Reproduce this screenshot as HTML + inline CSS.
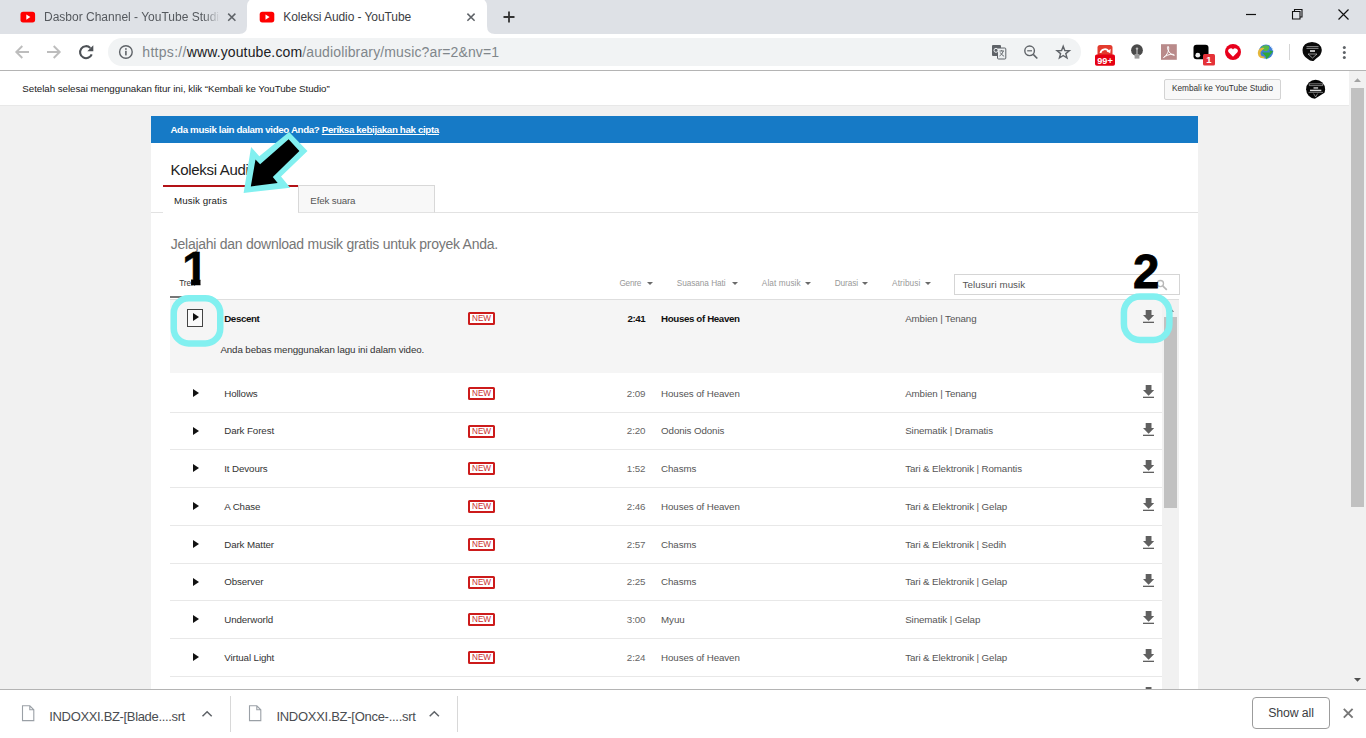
<!DOCTYPE html>
<html lang="id">
<head>
<meta charset="utf-8">
<title>Koleksi Audio - YouTube</title>
<style>
*{box-sizing:border-box;margin:0;padding:0}
html,body{width:1366px;height:738px;overflow:hidden;background:#f1f1f1;font-family:"Liberation Sans",sans-serif;color:#333}
.abs{position:absolute}
#tabstrip{left:0;top:0;width:1366px;height:34px;background:#dee1e6}
#activetab{left:247px;top:-2px;width:240px;height:36px;background:#fff;border-radius:8px 8px 0 0}
.tabtitle{font-size:12px;line-height:14px;color:#3c4043;white-space:nowrap;top:10.4px}
#toolbar{left:0;top:34px;width:1366px;height:36px;background:#fff}
#toolbarline{left:0;top:70px;width:1366px;height:1px;background:#b4b4b4}
#omni{left:108px;top:38px;width:973px;height:28px;border-radius:14px;background:#f1f3f4}
#url{left:142.3px;top:44px;font-size:14px;line-height:17px;color:#80868b;white-space:nowrap}
#url b{font-weight:normal;color:#202124}
#notice{left:0;top:71px;width:1349px;height:35px;background:#fff;border-bottom:1px solid #e8e8e8}
#noticetext{left:22.3px;top:82.9px;font-size:9.75px;line-height:12px;letter-spacing:-0.04px;color:#222;white-space:nowrap}
#backbtn{left:1164px;top:79px;width:117px;height:21px;background:#f8f8f8;border:1px solid #d3d3d3;border-radius:2px;font-size:8.25px;color:#333;text-align:center;line-height:17.5px;white-space:nowrap}
#vscroll{left:1349px;top:71px;width:17px;height:618px;background:#f1f1f1}
#vthumb{left:1351px;top:88px;width:13px;height:419px;background:#c1c1c1}
#bluebar{left:151px;top:116px;width:1047px;height:27px;background:#167ac6}
#bluetext{left:170.4px;top:123.9px;font-size:9.75px;line-height:12px;letter-spacing:-0.36px;font-weight:bold;color:#fff;white-space:nowrap}
#bluetext u{text-decoration:underline}
#main{left:151px;top:143px;width:1047px;height:546px;background:#fff}
#h1{left:170.6px;top:160.5px;font-size:15px;line-height:18px;letter-spacing:-0.32px;color:#222;white-space:nowrap}
#tabline{left:151px;top:212px;width:1047px;height:1px;background:#e2e2e2}
#tab1{left:163px;top:185px;width:135px;height:28px;background:#fff;border-top:2px solid #b31217}
#tab2{left:298px;top:185px;width:137px;height:28px;background:#f8f8f8;border:1px solid #d8d8d8;border-bottom:1px solid #e2e2e2}
.tabt{font-size:9.75px;line-height:12px;white-space:nowrap}
#sub{left:170.8px;top:235.5px;font-size:14px;line-height:17px;letter-spacing:-0.26px;color:#767676;white-space:nowrap}
.flt{font-size:8.25px;line-height:10px;color:#999;white-space:nowrap;top:279px}
.farr{position:absolute;top:281.8px;width:0;height:0;border-left:3.2px solid transparent;border-right:3.2px solid transparent;border-top:3.6px solid #6a6a6a;margin-left:-0.3px}
#search{left:954px;top:274px;width:226px;height:21px;border:1px solid #d5d5d5;background:#fff}
#searchtext{left:962.5px;top:278.5px;font-size:9.75px;line-height:12px;letter-spacing:0.07px;color:#555;white-space:nowrap}
#hdrline{left:170px;top:299px;width:1009px;height:1px;background:#dedede}
#trekline{left:170px;top:296px;width:14px;height:2px;background:#777}
#row1{left:170px;top:300px;width:992px;height:73px;background:#f5f5f5}
.row{left:170px;width:992px;height:38px;border-bottom:1px solid #e8e8e8}
.row span,.r1 span{position:absolute;white-space:nowrap;top:12.6px;font-size:9.75px;line-height:12px;letter-spacing:-0.1px}
.r1 span{top:13.1px}
.r1 span.b{font-weight:bold;color:#111;letter-spacing:-0.38px}
.r1 span.note{left:50.4px;top:44.4px;color:#333}
.tri{position:absolute;left:23.1px;top:13.9px;width:0;height:0;border-top:4px solid transparent;border-bottom:4px solid transparent;border-left:6.8px solid #111}
.t{left:54.2px;color:#333}
.lo>*{margin-top:0.8px}
.row span.new,.r1 span.new{left:298px;top:12px;width:27px;height:13px;border:2px solid #cc1b1b;border-radius:1.5px;color:#c93030;font-size:8.2px;line-height:9.8px;text-align:center;background:#fff;letter-spacing:-0.1px;overflow:hidden}
.r1 span.new{top:12px}
.d{right:516.6px;color:#666}
.a{left:491.1px;color:#555}
.g{left:735.2px;color:#555}
.dl{position:absolute;left:973px;top:10.2px;width:11.2px;height:13.2px}
.r1 .dl{top:9.7px}
#lscroll{left:1162px;top:300px;width:17px;height:389px;background:#f1f1f1}
#lthumb{left:1164px;top:317px;width:13px;height:190.5px;background:#c1c1c1}
#dlbar{left:0;top:689px;width:1366px;height:49px;background:#fff;border-top:1px solid #b4b4b4}
.dltext{font-size:13px;line-height:16px;color:#4a4d51;white-space:nowrap;top:708.5px}
#showall{left:1252px;top:697px;width:78px;height:32px;border:1px solid #9c9c9c;border-radius:4px;background:#fff;font-size:12.3px;letter-spacing:-0.1px;color:#3c4043;text-align:center;line-height:30px}
.num{font-weight:bold;color:#000;font-size:47.3px;line-height:47.3px;height:47.3px}
</style>
</head>
<body>
<!-- browser chrome -->
<div id="tabstrip" class="abs"></div>
<div id="activetab" class="abs"></div>
<div id="tt1" class="abs tabtitle" style="left:44px;color:#55595e;width:176px;overflow:hidden;-webkit-mask-image:linear-gradient(90deg,#000 160px,transparent 176px);mask-image:linear-gradient(90deg,#000 160px,transparent 176px)">Dasbor Channel - YouTube Studio</div>
<div id="tt2" class="abs tabtitle" style="left:283.3px;letter-spacing:-0.08px">Koleksi Audio - YouTube</div>
<div id="toolbar" class="abs"></div>
<div id="omni" class="abs"></div>
<div id="url" class="abs"><span id="u1" style="letter-spacing:0.3px">https://</span><b id="u2" style="letter-spacing:0.126px">www.youtube.com</b><span id="u3" style="letter-spacing:0.138px">/audiolibrary/music?ar=2&amp;nv=1</span></div>
<div id="toolbarline" class="abs"></div>
<!-- chrome icons -->
<svg class="abs" style="left:0;top:0" width="1366" height="71" viewBox="0 0 1366 71">
 <!-- active tab outward curves -->
 <path d="M239 34 Q247 34 247 26 L247 34 Z" fill="#fff"/>
 <path d="M495 34 Q487 34 487 26 L487 34 Z" fill="#fff"/>
 <!-- favicons -->
 <g id="yt1"><rect x="20.5" y="11.8" width="14.6" height="10.6" rx="2.6" fill="#f00"/><path d="M26.3 14.4 L30.4 17.1 L26.3 19.8 Z" fill="#fff"/></g>
 <g><rect x="259.7" y="11.8" width="14.6" height="10.6" rx="2.6" fill="#f00"/><path d="M265.5 14.4 L269.6 17.1 L265.5 19.8 Z" fill="#fff"/></g>
 <!-- tab close -->
 <path d="M228.2 13.6 l7.2 7.2 m0 -7.2 l-7.2 7.2" stroke="#5f6368" stroke-width="1.5" fill="none"/>
 <path d="M467.4 13.6 l7.2 7.2 m0 -7.2 l-7.2 7.2" stroke="#5f6368" stroke-width="1.5" fill="none"/>
 <!-- plus -->
 <path d="M503.5 17 h11 M509 11.5 v11" stroke="#333" stroke-width="1.8" fill="none"/>
 <!-- window controls -->
 <path d="M1246 14.5 h10" stroke="#111" stroke-width="1.2"/>
 <path d="M1292.5 11.5 h7.5 v7.5 h-7.5 z M1294.5 11.5 v-2 h7.5 v7.5 h-2" stroke="#111" stroke-width="1.1" fill="none"/>
 <path d="M1338.5 9.5 l10 10 m0 -10 l-10 10" stroke="#111" stroke-width="1.2" fill="none"/>
 <!-- back / forward / reload -->
 <path d="M29 52 H16.5 M22.3 46 L16.3 52 L22.3 58" stroke="#bdbdbd" stroke-width="1.9" fill="none"/>
 <path d="M47 52 H59.5 M53.7 46 L59.7 52 L53.7 58" stroke="#bdbdbd" stroke-width="1.9" fill="none"/>
 <path d="M90.3 47.9 A6 6 0 1 0 91.7 54.3" stroke="#4d5156" stroke-width="2.1" fill="none"/>
 <path d="M93.3 45.2 V51.2 H87.3 Z" fill="#4d5156"/>
 <!-- info -->
 <circle cx="125.9" cy="52" r="6.3" stroke="#5f6368" stroke-width="1.4" fill="none"/>
 <rect x="125.1" y="50.8" width="1.6" height="4.6" fill="#5f6368"/><rect x="125.1" y="48.2" width="1.6" height="1.6" fill="#5f6368"/>
 <!-- translate -->
 <rect x="992" y="45" width="9" height="11" rx="1" fill="#5f6368"/>
 <rect x="997.5" y="48" width="8.3" height="11" rx="1" fill="#eceff1" stroke="#5f6368" stroke-width="1"/>
 <path d="M999.5 51 h4.5 M1001.7 50 v1 M1003.3 51 q-1 3.5 -3.8 5 M1000.3 52.5 q1.2 2.5 3.8 3.8" stroke="#5f6368" stroke-width="0.9" fill="none"/>
 <circle cx="996" cy="50.3" r="2" stroke="#eceff1" stroke-width="1" fill="none"/>
 <!-- zoom out -->
 <circle cx="1029.6" cy="50.8" r="4.8" stroke="#5f6368" stroke-width="1.4" fill="none"/>
 <path d="M1033.2 54.4 L1037.3 58.5" stroke="#5f6368" stroke-width="1.6"/>
 <path d="M1027.2 50.8 h4.8" stroke="#5f6368" stroke-width="1.2"/>
 <!-- star -->
 <path d="M1063.2 46.2 L1064.8 50.5 L1069.4 50.7 L1065.8 53.6 L1067.0 58.0 L1063.2 55.5 L1059.4 58.0 L1060.6 53.6 L1057.0 50.7 L1061.6 50.5 Z" stroke="#5f6368" stroke-width="1.4" fill="none" stroke-linejoin="miter"/>
 <!-- red ext -->
 <rect x="1097.5" y="45" width="15" height="12" rx="2.5" fill="#e33b2e"/>
 <path d="M1100.5 53 a4.3 4.3 0 0 1 8.2 -1.2" stroke="#fff" stroke-width="1.8" fill="none"/>
 <path d="M1110.8 49 l-0.6 4.2 l-3.6 -2 z" fill="#fff"/>
 <rect x="1095" y="54.5" width="20" height="11.2" rx="1.8" fill="#e60012"/>
 <text x="1105" y="63.6" font-family="Liberation Sans, sans-serif" font-weight="bold" font-size="9.2" fill="#fff" text-anchor="middle">99+</text>
 <!-- bulb -->
 <circle cx="1137" cy="50.2" r="5.9" fill="#4a4a4a"/>
 <rect x="1134.6" y="54" width="4.8" height="4.6" fill="#9a9a9a"/>
 <path d="M1137 48.5 v6" stroke="#bbb" stroke-width="1.2"/>
 <circle cx="1137" cy="48.6" r="1.2" fill="#bbb"/>
 <!-- pdf -->
 <rect x="1161" y="44.2" width="15.8" height="15.6" fill="#b98a8a"/>
 <path d="M1163.5 57.5 C1167.5 55 1169.3 50 1168.6 47 C1168.2 45.6 1167 46.6 1167.6 48.8 C1168.6 52.3 1171.2 54.8 1174.3 55.4 C1175.4 54 1169 53.2 1163.5 57.5 Z" stroke="#fff" stroke-width="1" fill="none"/>
 <!-- black ext -->
 <rect x="1193.5" y="44.7" width="15" height="14.6" rx="3" fill="#000"/>
 <circle cx="1197.8" cy="55.2" r="2.4" fill="#eee"/>
 <rect x="1203" y="54" width="12" height="11.6" rx="1.5" fill="#e53238"/>
 <text x="1209" y="63.4" font-family="Liberation Sans, sans-serif" font-weight="bold" font-size="9.5" fill="#fff" text-anchor="middle">1</text>
 <!-- heart -->
 <circle cx="1233" cy="52" r="8" fill="#e8001c"/>
 <path d="M1233 56.8 L1228.6 52.3 A2.5 2.5 0 0 1 1233 49.6 A2.5 2.5 0 0 1 1237.4 52.3 Z" fill="#fff"/>
 <!-- idm globe -->
 <circle cx="1266" cy="51.6" r="7.2" fill="#3f7fd6"/>
 <path d="M1261 47 q4 -3 8 -1 q1 3 -2 5 q-4 1 -6 -4 z" fill="#58b947"/>
 <path d="M1258.5 50 q2 -3 6 -2 l-3 3 q-2 2 0 5 l4 1 q-4 3 -7 -1 q-1.5 -3 0 -6 z" fill="#e5b73b"/>
 <path d="M1262 52.5 h8.5 l-1.5 -2.2 l4 1 l-6.5 8.3 l-0.8 -3.4 z" fill="#2fa836"/>
 <path d="M1270 46 q2.5 1.5 3 4.5" stroke="#cfe3ff" stroke-width="1" fill="none"/>
 <!-- separator -->
 <rect x="1289" y="44" width="1" height="16" fill="#d5d5d5"/>
 <!-- avatar -->
 <path d="M1302.5 50 q0.5 -7.5 9.5 -8 q9 0.5 9.8 8 q0 5 -5.3 8.2 l-3 2.8 q-3 0.6 -6 -2.2 q-5 -3 -5 -8.8 z" fill="#0a0a0a"/>
 <path d="M1306.5 46.6 h12 M1306.5 48.4 h12 M1308 54 h9 l-4.5 4 z" stroke="#ddd" stroke-width="0.6" fill="none"/>
 <rect x="1310" y="50" width="5" height="2" fill="#bbb"/>
 <!-- menu dots -->
 <circle cx="1344.3" cy="47.6" r="1.5" fill="#5f6368"/><circle cx="1344.3" cy="52.5" r="1.5" fill="#5f6368"/><circle cx="1344.3" cy="57.4" r="1.5" fill="#5f6368"/>
</svg>


<!-- page -->
<div id="notice" class="abs"></div>
<div id="noticetext" class="abs">Setelah selesai menggunakan fitur ini, klik “Kembali ke YouTube Studio”</div>
<div id="backbtn" class="abs">Kembali ke YouTube Studio</div>
<div id="vscroll" class="abs"></div>
<div id="vthumb" class="abs"></div>


<!-- page avatar + scroll arrows -->
<svg class="abs" style="left:1290px;top:71px" width="76" height="620" viewBox="1290 71 76 620">
 <path d="M1306.1 89.3 a9.5 9.5 0 0 1 19 0 q0 2 -0.6 3.4 l-9.6 6 a9.5 9.5 0 0 1 -8.8 -9.4 z" fill="#050505"/>
 <path d="M1309.3 83.8 h13.4 v1.8 h-13.4 z M1308.6 92.4 h14.4 M1313.6 93.6 l2 3.4 l2 -3.4" stroke="#e6e6e6" stroke-width="0.5" fill="none"/>
 <rect x="1313.5" y="87.3" width="4.6" height="1.3" fill="#ddd"/><rect x="1310" y="89.7" width="11.3" height="1.5" fill="#ddd"/>
 <path d="M1354 82 l3.5 -3.7 l3.5 3.7 z" fill="#a3a3a3"/>
 <path d="M1354 678 l3.5 3.7 l3.5 -3.7 z" fill="#505050"/>
</svg>
<div id="bluebar" class="abs"></div>
<div id="bluetext" class="abs">Ada musik lain dalam video Anda? <u>Periksa kebijakan hak cipta</u></div>
<div id="main" class="abs"></div>
<div id="h1" class="abs">Koleksi Audio</div>
<div id="tabline" class="abs"></div>
<div id="tab1" class="abs"></div>
<div id="tab2" class="abs"></div>
<div class="abs tabt" style="left:174px;top:194.6px;color:#222;letter-spacing:0.09px">Musik gratis</div>
<div class="abs tabt" style="left:310.3px;top:194.6px;color:#555;letter-spacing:-0.16px">Efek suara</div>
<div id="sub" class="abs">Jelajahi dan download musik gratis untuk proyek Anda.</div>

<div id="f0" class="abs flt" style="left:179.2px;color:#333;letter-spacing:-0.1px">Trek</div>
<div id="f1" class="abs flt" style="left:619.4px;letter-spacing:-0.25px">Genre</div><div class="farr" style="left:647px"></div>
<div id="f2" class="abs flt" style="left:676.7px;letter-spacing:-0.05px">Suasana Hati</div><div class="farr" style="left:731.9px"></div>
<div id="f3" class="abs flt" style="left:761.8px;letter-spacing:0.09px">Alat musik</div><div class="farr" style="left:805px"></div>
<div id="f4" class="abs flt" style="left:834.7px;letter-spacing:-0.07px">Durasi</div><div class="farr" style="left:862.4px"></div>
<div id="f5" class="abs flt" style="left:892px;letter-spacing:0.13px">Atribusi</div><div class="farr" style="left:924.9px"></div>
<div id="search" class="abs"></div>
<div id="searchtext" class="abs">Telusuri musik</div>
<svg class="abs" style="left:1154px;top:277px" width="16" height="16" viewBox="1154 277 16 16"><circle cx="1160.4" cy="283.6" r="3.1" stroke="#b8b8b8" stroke-width="1.3" fill="none"/><path d="M1162.7 285.9 L1166.8 289.9" stroke="#b8b8b8" stroke-width="1.7"/></svg>
<div id="hdrline" class="abs"></div>
<div id="trekline" class="abs"></div>

<div id="row1" class="abs"></div>
<!--ROWS-->
<div class="abs r1" style="left:170px;top:300px;width:992px;height:73px"><div style="position:absolute;left:17px;top:9px;width:16px;height:18px;border:1px solid #444;background:#fafafa"></div><div class="tri" style="top:13.2px"></div><span class="t b">Descent</span><span class="new">NEW</span><span class="d b">2:41</span><span class="a b">Houses of Heaven</span><span class="g">Ambien | Tenang</span><svg class="dl" viewBox="0 0 11.2 13.2"><path d="M2.7 0h5.8v5h2.7L5.6 10.8 0 5h2.7z" fill="#606060"/><rect x="0" y="11.7" width="11.2" height="1.5" fill="#606060"/></svg><span class="note">Anda bebas menggunakan lagu ini dalam video.</span></div>
<div class="abs row" style="top:375px"><div class="tri"></div><span class="t">Hollows</span><span class="new">NEW</span><span class="d">2:09</span><span class="a">Houses of Heaven</span><span class="g">Ambien | Tenang</span><svg class="dl" viewBox="0 0 11.2 13.2"><path d="M2.7 0h5.8v5h2.7L5.6 10.8 0 5h2.7z" fill="#606060"/><rect x="0" y="11.7" width="11.2" height="1.5" fill="#606060"/></svg></div>
<div class="abs row lo" style="top:412px"><div class="tri"></div><span class="t">Dark Forest</span><span class="new">NEW</span><span class="d">2:20</span><span class="a">Odonis Odonis</span><span class="g">Sinematik | Dramatis</span><svg class="dl" viewBox="0 0 11.2 13.2"><path d="M2.7 0h5.8v5h2.7L5.6 10.8 0 5h2.7z" fill="#606060"/><rect x="0" y="11.7" width="11.2" height="1.5" fill="#606060"/></svg></div>
<div class="abs row" style="top:450px"><div class="tri"></div><span class="t">It Devours</span><span class="new">NEW</span><span class="d">1:52</span><span class="a">Chasms</span><span class="g">Tari &amp; Elektronik | Romantis</span><svg class="dl" viewBox="0 0 11.2 13.2"><path d="M2.7 0h5.8v5h2.7L5.6 10.8 0 5h2.7z" fill="#606060"/><rect x="0" y="11.7" width="11.2" height="1.5" fill="#606060"/></svg></div>
<div class="abs row" style="top:488px"><div class="tri"></div><span class="t">A Chase</span><span class="new">NEW</span><span class="d">2:46</span><span class="a">Houses of Heaven</span><span class="g">Tari &amp; Elektronik | Gelap</span><svg class="dl" viewBox="0 0 11.2 13.2"><path d="M2.7 0h5.8v5h2.7L5.6 10.8 0 5h2.7z" fill="#606060"/><rect x="0" y="11.7" width="11.2" height="1.5" fill="#606060"/></svg></div>
<div class="abs row" style="top:526px"><div class="tri"></div><span class="t">Dark Matter</span><span class="new">NEW</span><span class="d">2:57</span><span class="a">Chasms</span><span class="g">Tari &amp; Elektronik | Sedih</span><svg class="dl" viewBox="0 0 11.2 13.2"><path d="M2.7 0h5.8v5h2.7L5.6 10.8 0 5h2.7z" fill="#606060"/><rect x="0" y="11.7" width="11.2" height="1.5" fill="#606060"/></svg></div>
<div class="abs row lo" style="top:563px"><div class="tri"></div><span class="t">Observer</span><span class="new">NEW</span><span class="d">2:25</span><span class="a">Chasms</span><span class="g">Tari &amp; Elektronik | Gelap</span><svg class="dl" viewBox="0 0 11.2 13.2"><path d="M2.7 0h5.8v5h2.7L5.6 10.8 0 5h2.7z" fill="#606060"/><rect x="0" y="11.7" width="11.2" height="1.5" fill="#606060"/></svg></div>
<div class="abs row" style="top:601px"><div class="tri"></div><span class="t">Underworld</span><span class="new">NEW</span><span class="d">3:00</span><span class="a">Myuu</span><span class="g">Sinematik | Gelap</span><svg class="dl" viewBox="0 0 11.2 13.2"><path d="M2.7 0h5.8v5h2.7L5.6 10.8 0 5h2.7z" fill="#606060"/><rect x="0" y="11.7" width="11.2" height="1.5" fill="#606060"/></svg></div>
<div class="abs row" style="top:639px"><div class="tri"></div><span class="t">Virtual Light</span><span class="new">NEW</span><span class="d">2:24</span><span class="a">Houses of Heaven</span><span class="g">Tari &amp; Elektronik | Gelap</span><svg class="dl" viewBox="0 0 11.2 13.2"><path d="M2.7 0h5.8v5h2.7L5.6 10.8 0 5h2.7z" fill="#606060"/><rect x="0" y="11.7" width="11.2" height="1.5" fill="#606060"/></svg></div>
<div class="abs row" style="top:677px;border:0;height:12px;overflow:hidden"><svg class="dl" viewBox="0 0 11.2 13.2"><path d="M2.7 0h5.8v5h2.7L5.6 10.8 0 5h2.7z" fill="#606060"/><rect x="0" y="11.7" width="11.2" height="1.5" fill="#606060"/></svg></div>
<!--/ROWS-->

<div id="lscroll" class="abs"></div>
<div id="lthumb" class="abs"></div>
<svg class="abs" style="left:1162px;top:300px" width="17" height="17" viewBox="1162 300 17 17"><path d="M1167 311.8 l3.5 -3.7 l3.5 3.7 z" fill="#505050"/></svg>

<!-- downloads bar -->
<div id="dlbar" class="abs"></div>
<div id="dl1" class="abs dltext" style="left:49.3px;letter-spacing:-0.34px">INDOXXI.BZ-[Blade....srt</div>
<div id="dl2" class="abs dltext" style="left:276.4px;letter-spacing:-0.28px">INDOXXI.BZ-[Once-....srt</div>
<div id="showall" class="abs">Show all</div>
<svg class="abs" style="left:0;top:690px" width="1366" height="48" viewBox="0 690 1366 48">
 <g fill="none" stroke="#9aa0a6" stroke-width="1.1"><path d="M22.5 705.8 h7.3 l4 4 v10.8 h-11.3 z M29.8 705.8 v4 h4"/><path d="M249.5 705.8 h7.3 l4 4 v10.8 h-11.3 z M256.8 705.8 v4 h4"/></g>
 <path d="M202.5 716.3 l4.6 -4.6 l4.6 4.6 M429.7 716.3 l4.6 -4.6 l4.6 4.6" fill="none" stroke="#5f6368" stroke-width="1.5"/>
 <rect x="230" y="696" width="1" height="36" fill="#d8d8d8"/><rect x="457" y="696" width="1" height="36" fill="#d8d8d8"/>
 <path d="M1343.8 708.8 l8.8 8.8 m0 -8.8 l-8.8 8.8" stroke="#777" stroke-width="1.9" fill="none"/>
</svg>


<!-- annotations -->
<svg class="abs" style="left:0;top:100px;pointer-events:none" width="1366" height="260" viewBox="0 100 1366 260">
 <polygon points="243.6,192.9 251.1,147.1 259.3,156.3 289.1,131.9 307.5,150.9 281,176.4 290.2,187.8" fill="#82f0f0"/>
 <polygon points="250.8,186.4 255.5,159.6 260.1,164.2 288.6,139.3 299.4,150.9 272.8,176.9 277.7,182.9" fill="#000"/>
 <rect x="173.75" y="298.25" width="46.5" height="45.2" rx="15" ry="15" fill="none" stroke="#82f0f0" stroke-width="6.5"/>
 <rect x="1123.9" y="296.6" width="45.5" height="43.4" rx="16" ry="16" fill="none" stroke="#82f0f0" stroke-width="6.5"/>
</svg>

<div class="abs num" style="left:181.9px;top:245.1px;-webkit-text-stroke:0.4px #000;clip-path:polygon(0 0,18.6px 0,18.6px 100%,9.2px 100%,9.2px 24px,0 24px)">1</div>
<div class="abs num" style="left:1133.1px;top:247.9px;-webkit-text-stroke:0.9px #000">2</div>
</body>
</html>
